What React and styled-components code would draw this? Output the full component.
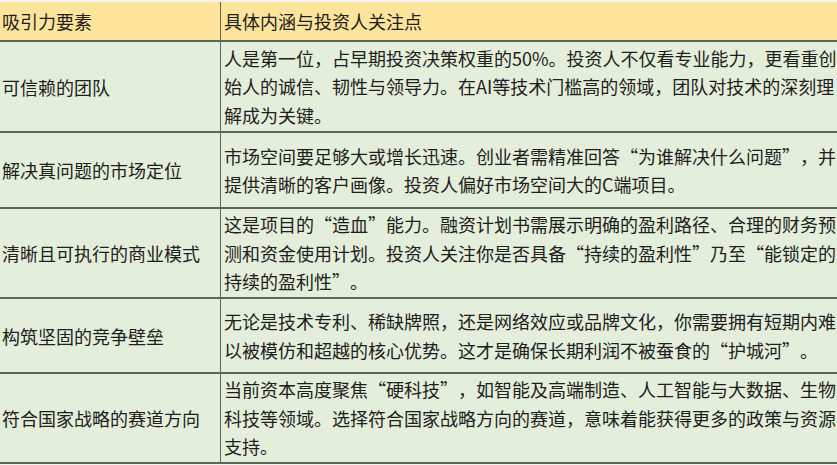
import React from 'react'
import styled, { createGlobalStyle } from "styled-components";

const GlobalStyle = createGlobalStyle`
    html, body {
        margin: 0;
        padding: 0;
        background: #f3f3f1;
        overflow: hidden;
    }
    body {
        font-family: "Noto Sans CJK SC", "Noto Sans", sans-serif;
    }
`;

const rows = [
    {
        title: "可信赖的团队",
        height: 89,
        lines: [
            "人是第一位，占早期投资决策权重的50%。投资人不仅看专业能力，更看重创",
            "始人的诚信、韧性与领导力。在AI等技术门槛高的领域，团队对技术的深刻理",
            "解成为关键。",
        ],
    },
    {
        title: "解决真问题的市场定位",
        height: 74,
        lines: [
            "市场空间要足够大或增长迅速。创业者需精准回答“为谁解决什么问题”，并",
            "提供清晰的客户画像。投资人偏好市场空间大的C端项目。",
        ],
    },
    {
        title: "清晰且可执行的商业模式",
        height: 88,
        lines: [
            "这是项目的“造血”能力。融资计划书需展示明确的盈利路径、合理的财务预",
            "测和资金使用计划。投资人关注你是否具备“持续的盈利性”乃至“能锁定的",
            "持续的盈利性”。",
        ],
    },
    {
        title: "构筑坚固的竞争壁垒",
        height: 73,
        lines: [
            "无论是技术专利、稀缺牌照，还是网络效应或品牌文化，你需要拥有短期内难",
            "以被模仿和超越的核心优势。这才是确保长期利润不被蚕食的“护城河”。",
        ],
    },
    {
        title: "符合国家战略的赛道方向",
        height: 88,
        lines: [
            "当前资本高度聚焦“硬科技”，如智能及高端制造、人工智能与大数据、生物",
            "科技等领域。选择符合国家战略方向的赛道，意味着能获得更多的政策与资源",
            "支持。",
        ],
    },
];

// curly quotes are drawn full width, as in the source table
const renderLine = (line) =>
    line.split(/([“”])/).map((part, i) =>
        part === "“" || part === "”" ? <Quote key={i}>{part}</Quote> : part
    );

const App = () => {
    return (
        <>
            <GlobalStyle />
            <Table lang="zh-CN">
                <Row $head $height={38}>
                    <KeyCell>吸引力要素</KeyCell>
                    <DescCell>具体内涵与投资人关注点</DescCell>
                </Row>
                {rows.map((row) => (
                    <Row key={row.title} $height={row.height}>
                        <KeyCell>{row.title}</KeyCell>
                        <DescCell>
                            {row.lines.map((line) => (
                                <Line key={line}>{renderLine(line)}</Line>
                            ))}
                        </DescCell>
                    </Row>
                ))}
            </Table>
        </>
    )
}

const Table = styled.div`
    margin-top: 2px;
    width: 837px;
    color: #1e201c;
    font-size: 18px;
`;

const Row = styled.div`
    display: grid;
    grid-template-columns: 221px 1fr;
    height: ${(p) => p.$height}px;
    box-sizing: content-box;
    border-bottom: 2px solid #5d6659;
    background: ${(p) => (p.$head ? "#fee59b" : "#e3efdb")};
`;

const KeyCell = styled.div`
    display: flex;
    align-items: center;
    padding-left: 2px;
    border-right: 1.5px solid #5d6659;
    white-space: nowrap;
`;

const DescCell = styled.div`
    display: flex;
    flex-direction: column;
    justify-content: center;
    padding-left: 3px;
    overflow: hidden;
`;

const Line = styled.div`
    line-height: 28.5px;
    white-space: nowrap;
`;

const Quote = styled.span`
    display: inline-block;
    width: 1em;
    text-align: ${(p) => (p.children === "“" ? "right" : "left")};
`;

export default App;
